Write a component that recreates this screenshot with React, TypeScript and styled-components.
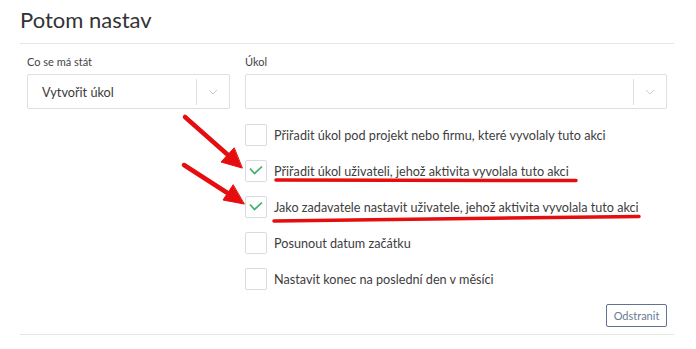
import styled, { createGlobalStyle } from 'styled-components'

const GlobalStyle = createGlobalStyle`
  body {
    margin: 0;
    background: #fff;
    font-family: Lato, "Open Sans", sans-serif;
    color: #333;
  }
`

const Page = styled.div`
  position: relative;
  width: 696px;
  height: 349px;
  overflow: hidden;
`

const Panel = styled.section`
  width: 654px;
  margin-left: 20px;
  border-bottom: 1px solid #e6e6e6;
  padding-bottom: 7px;
`

const Title = styled.h2`
  margin: 0;
  padding: 7px 0 10px;
  font-size: 22px;
  line-height: 1.2;
  font-weight: 400;
  color: #333;
  border-bottom: 1px solid #e6e6e6;
`

const Form = styled.div`
  padding: 11px 7px 0;
  display: grid;
  grid-template-columns: 203px 422px;
  column-gap: 15px;
`

const Field = styled.div`
  display: flex;
  flex-direction: column;
  gap: 6px;
`

const Label = styled.label`
  font-size: 11px;
  line-height: 13px;
  color: #444;
`

const Select = styled.div`
  box-sizing: border-box;
  height: 35px;
  border: 1px solid #dcdfe3;
  border-radius: 2px;
  display: flex;
  align-items: center;
`

const SelectValue = styled.div`
  flex: 1;
  padding-left: 14px;
  font-size: 12.7px;
  color: #3a3a3a;
`

const Arrow = styled.div`
  width: 32px;
  height: 26px;
  border-left: 1px solid #dcdfe3;
  display: flex;
  align-items: center;
  justify-content: center;
`

const Options = styled.div`
  grid-column: 2;
  margin-top: 15px;
  display: flex;
  flex-direction: column;
  gap: 14px;
`

const Option = styled.div`
  display: flex;
  align-items: center;
  gap: 7px;
  height: 22px;
`

const Box = styled.span`
  box-sizing: border-box;
  width: 22px;
  height: 22px;
  flex: none;
  border: 1px solid #d8dce1;
  border-radius: 2px;
  display: flex;
  align-items: center;
  justify-content: center;
`

const OptionText = styled.span`
  font-size: 12.65px;
  color: #3d3d3d;
`

const Actions = styled.div`
  grid-column: 1 / span 2;
  display: flex;
  justify-content: flex-end;
  margin-top: 14px;
`

const Button = styled.button`
  box-sizing: border-box;
  height: 23px;
  width: 61px;
  padding: 0;
  background: #fff;
  border: 1px solid #5f7392;
  border-radius: 2px;
  font-family: inherit;
  font-size: 11px;
  color: #6a7b93;
`

const Annotations = styled.svg`
  position: absolute;
  left: 0;
  top: 0;
  pointer-events: none;
`

const Chevron = () => (
  <svg width="10" height="6" viewBox="0 0 10 6">
    <polyline points="1,1 5,5 9,1" fill="none" stroke="#c8ccd1" strokeWidth="1" />
  </svg>
)

const Check = () => (
  <svg width="20" height="20" viewBox="0 0 20 20">
    <polyline points="4,7.5 8.5,12.5 16,5.5" fill="none" stroke="#3fae6e" strokeWidth="1.7" />
  </svg>
)

const options = [
  { text: 'Přiřadit úkol pod projekt nebo firmu, které vyvolaly tuto akci', checked: false },
  { text: 'Přiřadit úkol uživateli, jehož aktivita vyvolala tuto akci', checked: true },
  { text: 'Jako zadavatele nastavit uživatele, jehož aktivita vyvolala tuto akci', checked: true },
  { text: 'Posunout datum začátku', checked: false },
  { text: 'Nastavit konec na poslední den v měsíci', checked: false },
]

export default function App() {
  return (
    <Page>
      <GlobalStyle />
      <Panel>
        <Title>Potom nastav</Title>
        <Form>
          <Field>
            <Label>Co se má stát</Label>
            <Select>
              <SelectValue>Vytvořit úkol</SelectValue>
              <Arrow>
                <Chevron />
              </Arrow>
            </Select>
          </Field>
          <Field>
            <Label>Úkol</Label>
            <Select>
              <SelectValue />
              <Arrow>
                <Chevron />
              </Arrow>
            </Select>
          </Field>
          <Options>
            {options.map((o) => (
              <Option key={o.text}>
                <Box>{o.checked && <Check />}</Box>
                <OptionText>{o.text}</OptionText>
              </Option>
            ))}
          </Options>
          <Actions>
            <Button>Odstranit</Button>
          </Actions>
        </Form>
      </Panel>
      <Annotations width="696" height="349" viewBox="0 0 696 349">
        <g fill="#e50d0d" stroke="#e50d0d" strokeLinecap="round">
          <line x1="185" y1="117" x2="228" y2="155" strokeWidth="4.5" />
          <polygon points="242,168 221,162 234,148" strokeWidth="1" />
          <line x1="184" y1="165" x2="229" y2="194" strokeWidth="4.5" />
          <polygon points="244,204 223,200 233,185" strokeWidth="1" />
          <line x1="276" y1="180" x2="576" y2="180.5" strokeWidth="3.5" />
          <line x1="274" y1="221" x2="639" y2="216.5" strokeWidth="3.5" />
        </g>
      </Annotations>
    </Page>
  )
}
